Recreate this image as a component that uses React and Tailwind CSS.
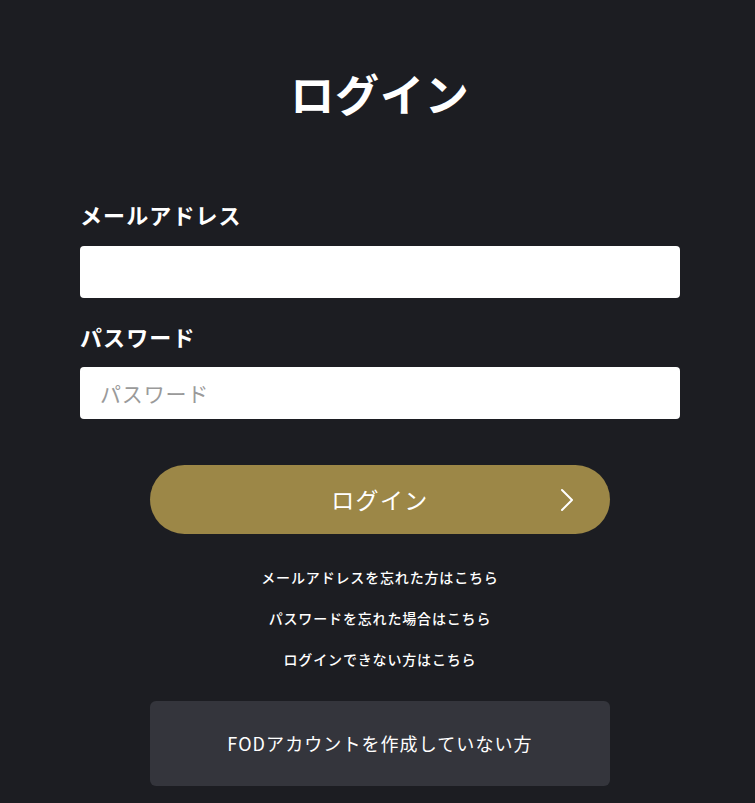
import React from "react";

// Login screen (dark theme)
export default function App() {
  return (
    <div
      className="min-h-screen bg-[#1c1d22] text-white"
      style={{ fontFamily: '"Noto Sans CJK JP", "Noto Sans", sans-serif' }}
    >
      <div className="ml-[80px] flex w-[600px] flex-col pt-[63px] pb-[17px]">
        {/* Title */}
        <h1 className="text-center text-[44px] font-bold leading-[60px] tracking-[0.02em]">
          ログイン
        </h1>

        {/* Email */}
        <label className="mt-[75px] text-[22px] font-bold leading-[32px] tracking-[0.05em]">
          メールアドレス
        </label>
        <input
          type="email"
          className="mt-[16px] h-[52px] w-full rounded-[4px] bg-white px-5 text-[21px] text-gray-800 outline-none"
        />

        {/* Password */}
        <label className="mt-[22px] text-[22px] font-bold leading-[32px] tracking-[0.05em]">
          パスワード
        </label>
        <input
          type="password"
          placeholder="パスワード"
          className="mt-[15px] h-[52px] w-full rounded-[4px] bg-white px-5 text-[21px] tracking-[0.04em] text-gray-800 outline-none placeholder:text-[#9a9a9a]"
        />

        {/* Login button */}
        <button className="relative mx-auto mt-[46px] flex h-[69px] w-[460px] items-center justify-center rounded-full bg-[#9c8747] text-[23px] font-normal tracking-[0.06em]">
          ログイン
          <svg
            className="absolute right-[36px] top-1/2 -translate-y-1/2"
            width="14"
            height="24"
            viewBox="0 0 14 24"
            fill="none"
            stroke="white"
            strokeWidth="2"
            strokeLinecap="round"
            strokeLinejoin="round"
          >
            <path d="M2 2l10 10-10 10" />
          </svg>
        </button>

        {/* Help links */}
        <div className="mt-[32px] flex flex-col items-center gap-[19px] text-[14px] font-medium leading-[22px] tracking-[0.06em]">
          <a href="#">メールアドレスを忘れた方はこちら</a>
          <a href="#">パスワードを忘れた場合はこちら</a>
          <a href="#">ログインできない方はこちら</a>
        </div>

        {/* Register */}
        <div className="mx-auto mt-[31px] flex h-[85px] w-[460px] items-center justify-center rounded-[6px] bg-[#34353c] text-[18px] tracking-[0.06em]">
          FODアカウントを作成していない方
        </div>
      </div>
    </div>
  );
}
